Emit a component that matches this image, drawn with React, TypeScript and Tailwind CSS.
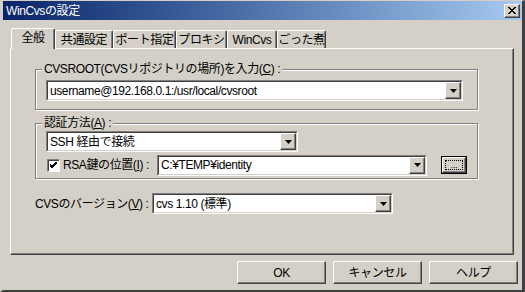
import React from 'react';

const font = "font-['Liberation_Sans','Noto_Sans_CJK_JP',sans-serif]";

const Arrow = () => (
  <svg width="7" height="4" viewBox="0 0 7 4">
    <path d="M0 0H7L3.5 4Z" fill="#000" />
  </svg>
);

const Combo = ({ value, width }: { value: string; width: string }) => (
  <div className={`${width} h-[21px] flex border border-t-[#808080] border-l-[#808080] border-r-white border-b-white`}>
    <div className="flex-1 flex border border-t-[#404040] border-l-[#404040] border-r-[#d4d0c8] border-b-[#d4d0c8] bg-white">
      <div className="flex-1 flex items-center pl-[2px] text-black whitespace-nowrap overflow-hidden">{value}</div>
      <div className="w-[16px] h-full flex items-center justify-center bg-[#d4d0c8] border border-t-white border-l-white border-r-[#404040] border-b-[#404040] shadow-[inset_-1px_-1px_0_#808080]">
        <Arrow />
      </div>
    </div>
  </div>
);

const Mn = ({ c }: { c: string }) => <span className="underline underline-offset-[1px]">{c}</span>;

const Group = ({ label, children }: { label: React.ReactNode; children: React.ReactNode }) => (
  <div className="relative w-[443px] border border-[#808080] shadow-[inset_1px_1px_0_#fff,1px_1px_0_#fff]">
    <span className="absolute -top-[8px] left-[6px] px-[2px] bg-[#d4d0c8] leading-[14px] whitespace-nowrap">{label}</span>
    {children}
  </div>
);

const Button = ({ label }: { label: string }) => (
  <div className="w-[89px] h-[23px] flex items-center justify-center border border-t-white border-l-white border-r-[#404040] border-b-[#404040] shadow-[inset_-1px_-1px_0_#808080]">
    {label}
  </div>
);

const tabs = [
  { name: '全般', w: 'w-[44px] ml-px' },
  { name: '共通設定', w: 'w-[58px]' },
  { name: 'ポート指定', w: 'w-[63px]' },
  { name: 'プロキシ', w: 'w-[51px]' },
  { name: 'WinCvs', w: 'w-[50px]' },
  { name: 'ごった煮', w: 'w-[49px]' },
];

export default function App() {
  return (
    <div className={`${font} text-[12px] tracking-[-0.4px] text-black w-[525px] h-[292px] bg-[#d4d0c8] flex flex-col border-t border-l-[3px] border-r-[3px] border-b-[2px] border-t-[#d4d0c8] border-l-[#d4d0c8] border-r-[#404040] border-b-[#404040] overflow-hidden`}>
      {/* title bar */}
      <div className="h-[19px] shrink-0 flex items-center justify-between pl-[3px] pr-[2px] bg-gradient-to-r from-[#0a246a] to-[#a6caf0]">
        <span className="text-white">WinCvsの設定</span>
        <div className="w-[16px] h-[14px] flex items-center justify-center bg-[#d4d0c8] border border-t-white border-l-white border-r-[#404040] border-b-[#404040] shadow-[inset_-1px_-1px_0_#808080]">
          <svg width="8" height="7" viewBox="0 0 8 7">
            <path d="M0 0L7 7M1 0L8 7M7 0L0 7M8 0L1 7" stroke="#000" strokeWidth="1" />
          </svg>
        </div>
      </div>

      {/* tabs */}
      <div className="mt-[8px] ml-[7px] h-[20px] flex items-end">
        {tabs.map((t, i) => (
          <div
            key={t.name}
            className={`${t.w} ${i === 0 ? 'h-[21px] -mb-px relative z-10 pb-[3px]' : 'h-[18px] pt-px'} flex items-center justify-center bg-[#d4d0c8] rounded-t-[2px] border-t border-l border-r border-t-white border-l-white border-r-[#404040] shadow-[inset_-1px_0_0_#808080] whitespace-nowrap`}
          >
            {t.name}
          </div>
        ))}
      </div>

      {/* panel */}
      <div className="ml-[7px] w-[504px] h-[207px] border border-t-white border-l-white border-r-[#404040] border-b-[#404040] shadow-[inset_-1px_-1px_0_#808080] pl-[24px] pt-[20px] flex flex-col">
        <Group label={<>CVSROOT(CVSリポジトリの場所)を入力(<Mn c="C" />) :</>}>
          <div className="pl-[10px] pt-[10px] pb-[8px]">
            <Combo value="username@192.168.0.1:/usr/local/cvsroot" width="w-[417px]" />
          </div>
        </Group>

        <div className="mt-[13px]">
          <Group label={<>認証方法(<Mn c="A" />) :</>}>
            <div className="pl-[10px] pt-[7px] pb-[3px] flex flex-col gap-[3px]">
              <Combo value="SSH 経由で接続" width="w-[252px]" />
              <div className="h-[20px] flex items-center">
                <div className="ml-px w-[13px] h-[13px] bg-white border border-t-[#808080] border-l-[#808080] border-r-white border-b-white shadow-[inset_1px_1px_0_#404040] flex items-center justify-center">
                  <svg width="7" height="7" viewBox="0 0 7 7">
                    <path d="M0 2L2 4L7 -1M0 3L2 5L7 0M0 4L2 6L7 1" stroke="#000" strokeWidth="1" fill="none" />
                  </svg>
                </div>
                <span className="ml-[3px] w-[94px] whitespace-nowrap">RSA鍵の位置(<Mn c="I" />) :</span>
                <Combo value="C:¥TEMP¥identity" width="w-[270px]" />
                <div className="ml-[14px] w-[26px] h-[18px] border border-black">
                  <div className="w-full h-full border border-t-white border-l-white border-r-[#404040] border-b-[#404040] shadow-[inset_-1px_-1px_0_#808080] p-[2px]">
                    <div className="w-full h-full border border-dotted border-black flex items-end justify-center text-[9px] leading-[8px]">...</div>
                  </div>
                </div>
              </div>
            </div>
          </Group>
        </div>

        <div className="mt-[14px] flex items-center">
          <span className="w-[117px] whitespace-nowrap">CVSのバージョン(<Mn c="V" />) :</span>
          <Combo value="cvs 1.10 (標準)" width="w-[241px]" />
        </div>
      </div>

      {/* buttons */}
      <div className="mt-[6px] pr-[4px] flex justify-end gap-[7px]">
        <Button label="OK" />
        <Button label="キャンセル" />
        <Button label="ヘルプ" />
      </div>
    </div>
  );
}
